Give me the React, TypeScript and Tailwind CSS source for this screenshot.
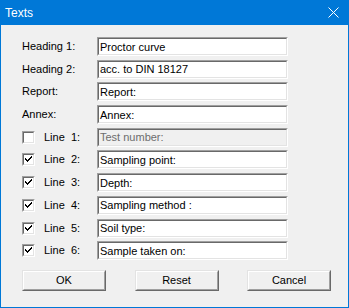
import React from "react";

const font = { fontFamily: '"Liberation Sans", Arial, sans-serif' };

function Box({ value, disabled }: { value: string; disabled?: boolean }) {
  return (
    <div className="w-[191px] h-[19px] border border-t-[#a0a0a0] border-l-[#a0a0a0] border-b-white border-r-white">
      <div
        className={`w-full h-full border border-t-[#696969] border-l-[#696969] border-b-[#e3e3e3] border-r-[#e3e3e3] flex items-center pl-[1px] pt-[1px] text-[11px] leading-none ${
          disabled ? "bg-[#f0f0f0] text-[#6d6d6d]" : "bg-white text-black"
        }`}
      >
        {value}
      </div>
    </div>
  );
}

function Check({ checked }: { checked: boolean }) {
  return (
    <div className="w-[13px] h-[13px] border border-t-[#a0a0a0] border-l-[#a0a0a0] border-b-white border-r-white">
      <div className="w-full h-full bg-white border border-t-[#696969] border-l-[#696969] border-b-[#e3e3e3] border-r-[#e3e3e3] relative">
        {checked && (
          <svg width="9" height="9" viewBox="0 0 9 9" className="absolute left-0 top-0">
            <path d="M1 3h1v1h1v1h1V4h1V3h1V2h1V1h1v2H7v1H6v1H5v1H4v1H3V6H2V5H1z" fill="#000" />
          </svg>
        )}
      </div>
    </div>
  );
}

function Btn({ label }: { label: string }) {
  return (
    <div className="w-[84px] h-[21px] border border-t-[#e3e3e3] border-l-[#e3e3e3] border-b-[#696969] border-r-[#696969]">
      <div className="w-full h-full border border-t-white border-l-white border-b-[#a0a0a0] border-r-[#a0a0a0] bg-[#f0f0f0] flex items-center justify-center text-[11px] text-black leading-none">
        {label}
      </div>
    </div>
  );
}

export default function App() {
  const heads = [
    ["Heading 1:", "Proctor curve"],
    ["Heading 2:", "acc. to DIN 18127"],
    ["Report:", "Report:"],
    ["Annex:", "Annex:"],
  ];
  const lines: [string, string, boolean][] = [
    ["1", "Test number:", false],
    ["2", "Sampling point:", true],
    ["3", "Depth:", true],
    ["4", "Sampling method :", true],
    ["5", "Soil type:", true],
    ["6", "Sample taken on:", true],
  ];
  return (
    <div style={font} className="w-[349px] h-[308px] flex flex-col bg-[#0078d7]">
      <div className="h-[25px] flex items-center justify-between pl-[5px] pr-[10px] text-white text-[12px]">
        <span>Texts</span>
        <svg width="11" height="11" viewBox="0 0 11 11">
          <path d="M0.5 0.5L10.5 10.5M10.5 0.5L0.5 10.5" stroke="#fff" strokeWidth="1" />
        </svg>
      </div>
      <div className="flex-1 mx-[1px] mb-[1px] bg-[#f0f0f0] pl-[21px] pt-[12px] flex flex-col">
        <div className="flex flex-col gap-[3.7px]">
          {heads.map(([l, v]) => (
            <div key={l} className="flex items-center h-[19px]">
              <div className="w-[75px] text-[11px] text-black leading-none">{l}</div>
              <Box value={v} />
            </div>
          ))}
          {lines.map(([n, v, c]) => (
            <div key={n} className="flex items-center h-[19px]">
              <div className="w-[75px] flex items-center">
                <Check checked={c} />
                <span className="ml-[9px] text-[11px] text-black leading-none whitespace-pre">{`Line  ${n}:`}</span>
              </div>
              <Box value={v} disabled={!c} />
            </div>
          ))}
        </div>
        <div className="mt-[10px] w-[309px] flex justify-between">
          <Btn label="OK" />
          <Btn label="Reset" />
          <Btn label="Cancel" />
        </div>
      </div>
    </div>
  );
}
